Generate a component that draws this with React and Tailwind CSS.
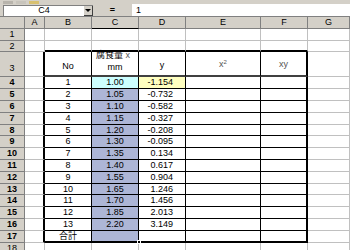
import React from "react";

const cols = [
  { key: "A", w: "w-[20px]" },
  { key: "B", w: "w-[47px]" },
  { key: "C", w: "w-[47px]" },
  { key: "D", w: "w-[47px]" },
  { key: "E", w: "w-[75px]" },
  { key: "F", w: "w-[47px]" },
  { key: "G", w: "w-[42px]" },
];

// row 4..17 heights (sheet rows come out at ~11.8px)
const dataHeights = [
  "h-[12px]", "h-[12px]", "h-[12px]", "h-[12px]", "h-[11px]",
  "h-[12px]", "h-[12px]", "h-[12px]", "h-[12px]", "h-[11px]",
  "h-[12px]", "h-[12px]", "h-[12px]", "h-[12px]",
];

const data = [
  ["1", "1.00", "-1.154"],
  ["2", "1.05", "-0.732"],
  ["3", "1.10", "-0.582"],
  ["4", "1.15", "-0.327"],
  ["5", "1.20", "-0.208"],
  ["6", "1.30", "-0.095"],
  ["7", "1.35", "0.134"],
  ["8", "1.40", "0.617"],
  ["9", "1.55", "0.904"],
  ["10", "1.65", "1.246"],
  ["11", "1.70", "1.456"],
  ["12", "1.85", "2.013"],
  ["13", "2.20", "3.149"],
  ["合計", "", ""],
];

const RowHead = ({ label, h, bold }) => (
  <div
    className={`w-[25px] ${h} shrink-0 bg-[#d4d0c8] border-r border-b border-[#808080] flex items-center justify-center ${
      bold ? "font-bold" : ""
    }`}
  >
    {label}
  </div>
);

const Grid = ({ w, h, className = "", children }) => (
  <div className={`${w} ${h} shrink-0 border-r border-b border-[#c0c0c0] ${className}`}>{children}</div>
);

export default function App() {
  return (
    <div className="w-[350px] h-[250px] overflow-hidden bg-white text-black text-[9px] leading-none font-['Liberation_Sans','Noto_Sans_CJK_JP',sans-serif]">
      {/* toolbar remnant */}
      <div className="h-[4px] bg-[#d4d0c8] flex items-end gap-[3px] pl-[3px]">
        <div className="w-[10px] h-[3px] bg-[#b8b4ac]" />
        <div className="w-[10px] h-[3px] bg-[#c8c4bc]" />
        <div className="w-[10px] h-[3px] bg-[#d8c070]" />
      </div>

      {/* formula bar */}
      <div className="h-[13px] bg-[#d4d0c8] flex items-center border-b border-[#808080]">
        <div className="ml-[3px] w-[90px] h-[11px] bg-white border-t border-l border-[#808080] flex">
          <div className="flex-1 flex items-center justify-center">C4</div>
          <div className="w-[9px] h-full bg-[#d4d0c8] border-r border-b border-[#404040] flex items-center justify-center">
            <div className="w-0 h-0 border-l-[3px] border-r-[3px] border-t-[3px] border-l-transparent border-r-transparent border-t-black" />
          </div>
        </div>
        <div className="w-[39px] flex items-center justify-center font-bold">=</div>
        <div className="flex-1 h-[12px] bg-white flex items-center pl-[4px]">1</div>
      </div>

      {/* column headers */}
      <div className="flex">
        <div className="w-[25px] h-[12px] shrink-0 bg-[#d4d0c8] border-r border-b border-[#808080]" />
        {cols.map((c) => (
          <div
            key={c.key}
            className={`${c.w} h-[12px] shrink-0 bg-[#d4d0c8] border-r border-b border-[#808080] flex items-center justify-center ${
              c.key === "C" ? "border-b-black" : ""
            }`}
          >
            {c.key}
          </div>
        ))}
      </div>

      {/* row 1 */}
      <div className="flex">
        <RowHead label="1" h="h-[12px]" />
        {cols.map((c) => (
          <Grid key={c.key} w={c.w} h="h-[12px]" />
        ))}
      </div>

      {/* row 2 - top edge of table */}
      <div className="flex">
        <RowHead label="2" h="h-[11px]" />
        {cols.map((c) => (
          <Grid
            key={c.key}
            w={c.w}
            h="h-[11px]"
            className={"BCDEF".includes(c.key) ? "border-b-2 border-b-black" : ""}
          />
        ))}
      </div>

      {/* row 3 - headers */}
      <div className="flex">
        <div className="w-[25px] h-[25px] shrink-0 bg-[#d4d0c8] border-r border-b border-[#808080] flex items-end justify-center pb-[3px]">
          3
        </div>
        <Grid w="w-[20px]" h="h-[25px]" className="border-r-2 border-r-black" />
        <div className="w-[47px] h-[25px] shrink-0 border-r border-b-2 border-r-black border-b-[#404040] flex items-end justify-center pb-[4px]">
          No
        </div>
        <div className="w-[47px] h-[25px] shrink-0 border-r border-b-2 border-r-black border-b-[#404040] flex flex-col items-center justify-end pb-[3px] gap-[3px]">
          <span className="pr-[4px]">
            腐食量 <span className="text-[#555]">x</span>
          </span>
          <span>mm</span>
        </div>
        <div className="w-[47px] h-[25px] shrink-0 border-r border-b-2 border-r-black border-b-[#404040] flex items-end justify-center pb-[5px]">
          y
        </div>
        <div className="w-[75px] h-[25px] shrink-0 border-r border-b-2 border-r-black border-b-[#404040] flex items-end justify-center pb-[6px] text-[#555]">
          <span>
            x<sup className="text-[6px]">2</sup>
          </span>
        </div>
        <div className="w-[47px] h-[25px] shrink-0 border-r-2 border-b-2 border-r-black border-b-[#404040] flex items-end justify-center pb-[6px] text-[#555]">
          xy
        </div>
        <Grid w="w-[42px]" h="h-[25px]" />
      </div>

      {/* rows 4..17 */}
      {data.map((r, i) => {
        const h = dataHeights[i];
        const last = i === data.length - 1;
        const bb = last ? "border-b-2 border-b-black" : "border-b border-b-black";
        const cFill = i === 0 ? "bg-[#ccffff]" : "bg-[#adb6d6]";
        return (
          <div key={i} className="flex">
            <RowHead label={String(i + 4)} h={h} bold />
            <Grid w="w-[20px]" h={h} className="border-r-2 border-r-black" />
            <div className={`w-[47px] ${h} shrink-0 border-r border-r-black ${bb} flex items-center justify-center`}>
              {r[0]}
            </div>
            <div
              className={`relative w-[47px] ${h} shrink-0 border-r border-r-black ${bb} ${cFill} flex items-center justify-center`}
            >
              {r[1]}
              {last && (
                <div className="absolute right-[-3px] bottom-[-3px] w-[4px] h-[4px] bg-black border border-white z-10" />
              )}
            </div>
            <div
              className={`w-[47px] ${h} shrink-0 border-r border-r-black ${bb} ${
                i === 0 ? "bg-[#ffffc0]" : ""
              } flex items-center justify-end pr-[12px]`}
            >
              {r[2]}
            </div>
            <div className={`w-[75px] ${h} shrink-0 border-r border-r-black ${bb}`} />
            <div className={`w-[47px] ${h} shrink-0 border-r-2 border-r-black ${bb}`} />
            <Grid w="w-[42px]" h={h} />
          </div>
        );
      })}

      {/* row 18 */}
      <div className="flex">
        <RowHead label="18" h="h-[12px]" />
        {cols.map((c) => (
          <Grid key={c.key} w={c.w} h="h-[12px]" />
        ))}
      </div>
    </div>
  );
}
